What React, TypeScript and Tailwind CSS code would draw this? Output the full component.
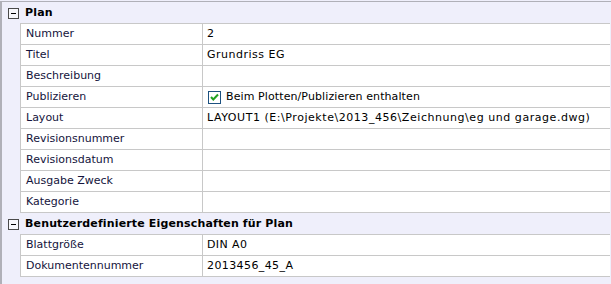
import React from "react";

type Row = { label: string; value?: React.ReactNode; track?: string };

const font = { fontFamily: '"DejaVu Sans", Tahoma, sans-serif' };

function MinusBox() {
  return (
    <div className="w-[11px] h-[11px] border border-[#4a4a4a] bg-[#f8f8fc] flex items-center justify-center">
      <div className="w-[5px] h-px bg-black" />
    </div>
  );
}

function CheckBox() {
  return (
    <div className="w-[13px] h-[13px] border border-[#1c5180] bg-white flex items-center justify-center shrink-0">
      <svg width="9" height="9" viewBox="0 0 9 9">
        <path d="M1 4 L3.3 6.5 L8 1.5" stroke="#21a121" strokeWidth="2" fill="none" />
      </svg>
    </div>
  );
}

function Header({ title }: { title: string }) {
  return (
    <div className="h-[21px] flex items-center pt-px">
      <div className="w-[20px] flex justify-center pl-[2px]">
        <MinusBox />
      </div>
      <span className="pl-[3px] font-bold text-[11px] text-black tracking-[0.15px]">{title}</span>
    </div>
  );
}

function Rows({ rows }: { rows: Row[] }) {
  return (
    <div className="ml-[18px] border-b border-[#c8c8c8]">
      {rows.map((r) => (
        <div key={r.label} className="h-[21px] flex border-t border-[#c8c8c8] bg-white">
          <div className="w-[183px] border-l border-r border-[#c8c8c8] pl-[5px] pt-px flex items-center text-[#14143c]">
            {r.label}
          </div>
          <div className={`flex-1 pl-[4px] pt-px flex items-center text-black whitespace-nowrap ${r.track ?? ""}`}>
            {r.value}
          </div>
        </div>
      ))}
    </div>
  );
}

export default function App() {
  const plan: Row[] = [
    { label: "Nummer", value: "2" },
    { label: "Titel", value: "Grundriss EG", track: "tracking-[0.5px]" },
    { label: "Beschreibung" },
    {
      label: "Publizieren",
      value: (
        <span className="flex items-center gap-[5px] pl-[1px] tracking-[0.1px]">
          <CheckBox />
          Beim Plotten/Publizieren enthalten
        </span>
      ),
    },
    {
      label: "Layout",
      value: "LAYOUT1 (E:\\Projekte\\2013_456\\Zeichnung\\eg und garage.dwg)",
      track: "tracking-[0.55px]",
    },
    { label: "Revisionsnummer" },
    { label: "Revisionsdatum" },
    { label: "Ausgabe Zweck" },
    { label: "Kategorie" },
  ];
  const custom: Row[] = [
    { label: "Blattgröße", value: "DIN A0", track: "tracking-[0.4px]" },
    { label: "Dokumentennummer", value: "2013456_45_A", track: "tracking-[0.4px]" },
  ];
  return (
    <div className="w-[611px] h-[284px] bg-[#efeffb] overflow-hidden text-[11px]" style={font}>
      <div className="h-full pt-px">
        <div className="h-full border-t border-l-2 border-[#b0b0b8] pr-px">
          <Header title="Plan" />
          <Rows rows={plan} />
          <Header title="Benutzerdefinierte Eigenschaften für Plan" />
          <Rows rows={custom} />
        </div>
      </div>
    </div>
  );
}
